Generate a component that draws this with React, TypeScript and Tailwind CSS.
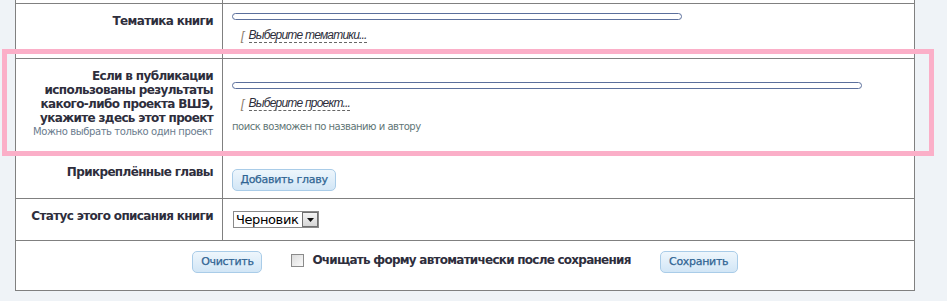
import React from "react";

const F = { fontFamily: '"DejaVu Sans", Verdana, sans-serif' };
const L = { fontFamily: '"Liberation Sans", Arial, sans-serif' };

function Btn({ children, w }: { children: React.ReactNode; w: string }) {
  return (
    <div
      className={`${w} h-[22px] flex items-center justify-center rounded-[5px] border border-[#a9cce8] bg-gradient-to-b from-[#eef6fc] to-[#d2e6f6] text-[11px] tracking-[-0.3px] text-[#2f6493]`}
      style={{ WebkitTextStroke: "0.25px #2f6493" }}
    >
      {children}
    </div>
  );
}

function Picker({ text }: { text: string }) {
  return (
    <div className="flex items-center ml-[9px] h-[14px] text-[12px] italic tracking-[-0.8px]" style={L}>
      <span className="text-[#8a7a6a] mr-[5px]">[</span>
      <span className="text-[#2d2d3a] border-b border-dashed border-[#666] leading-[13px]">{text}</span>
    </div>
  );
}

function Bar({ w }: { w: string }) {
  return <div className={`${w} h-[7px] rounded-[4px] border border-[#5b6f9c] bg-white`} />;
}

const label = "w-[207px] border-r border-[#808080] pt-[10px] pr-[9px] text-right text-[12px] font-bold leading-[14px] tracking-[-0.65px] whitespace-nowrap";

export default function App() {
  return (
    <div className="relative w-[947px] h-[301px] overflow-hidden bg-[#eff3f7]" style={F}>
      <div className="ml-[15px] w-[900px] border-x border-b border-[#808080] bg-white text-[#2e2e3c]">
        {/* partial row above */}
        <div className="flex h-[3px]">
          <div className="w-[207px] border-r border-[#808080]" />
          <div className="flex-1" />
        </div>
        {/* Тематика книги */}
        <div className="flex h-[55px] border-t border-[#808080]">
          <div className={label}>Тематика книги</div>
          <div className="flex-1 pt-[9px] pl-[9px]">
            <Bar w="w-[450px]" />
            <div className="mt-[9px]">
              <Picker text="Выберите тематики..." />
            </div>
          </div>
        </div>
        {/* Проект */}
        <div className="flex h-[96px] border-t border-[#808080]">
          <div className="w-[207px] border-r border-[#808080] pt-[10px] pr-[9px] text-right whitespace-nowrap">
            <div className="text-[12px] font-bold leading-[14px] tracking-[-0.65px]">
              Если в публикации
              <br />
              использованы результаты
              <br />
              какого-либо проекта ВШЭ,
              <br />
              укажите здесь этот проект
            </div>
            <div className="text-[10px] leading-[13px] tracking-[-0.4px] text-[#6a7c8e]">Можно выбрать только один проект</div>
          </div>
          <div className="flex-1 pt-[23px] pl-[9px]">
            <Bar w="w-[630px]" />
            <div className="mt-[8px]">
              <Picker text="Выберите проект..." />
            </div>
            <div className="mt-[9px] text-[10px] leading-[13px] tracking-[-0.5px] text-[#5f7676]">поиск возможен по названию и автору</div>
          </div>
        </div>
        {/* Прикреплённые главы */}
        <div className="flex h-[44px] border-t border-[#808080]">
          <div className={label}>Прикреплённые главы</div>
          <div className="flex-1 pt-[14px] pl-[9px]">
            <Btn w="w-[104px]">Добавить главу</Btn>
          </div>
        </div>
        {/* Статус */}
        <div className="flex h-[42px] border-t border-[#808080]">
          <div className={label}>Статус этого описания книги</div>
          <div className="flex-1 pt-[12px] pl-[10px]">
            <div className="flex w-[86px] h-[17px] border border-[#8a8a8a] bg-white">
              <div className="flex-1 pl-[2px] text-[13px] leading-[15px] tracking-[-0.4px] text-black">Черновик</div>
              <div className="w-[16px] h-[15px] border border-[#6f6f6f] bg-gradient-to-b from-[#f4f4f4] to-[#d6d6d6] flex items-center justify-center">
                <svg width="7" height="4" viewBox="0 0 7 4">
                  <path d="M0 0H7L3.5 4Z" fill="#111" />
                </svg>
              </div>
            </div>
          </div>
        </div>
        {/* Кнопки */}
        <div className="flex justify-center h-[50px] border-t border-[#808080] pt-[10px]">
          <div className="flex items-start h-[22px]">
            <Btn w="w-[70px]">Очистить</Btn>
            <div className="ml-[29px] mt-[3px] w-[13px] h-[13px] border border-[#8b8b8b] bg-gradient-to-br from-[#dcdcdc] to-[#fafafa]" />
            <div className="ml-[8px] mt-[2px] text-[12px] font-bold leading-[14px] tracking-[-0.75px] whitespace-nowrap">
              Очищать форму автоматически после сохранения
            </div>
            <div className="ml-[29px]">
              <Btn w="w-[78px]">Сохранить</Btn>
            </div>
          </div>
        </div>
      </div>
      {/* highlight */}
      <div className="absolute left-[2px] top-[49px] w-[932px] h-[107px] border-[5px] border-[#fbafc8] pointer-events-none" />
    </div>
  );
}
